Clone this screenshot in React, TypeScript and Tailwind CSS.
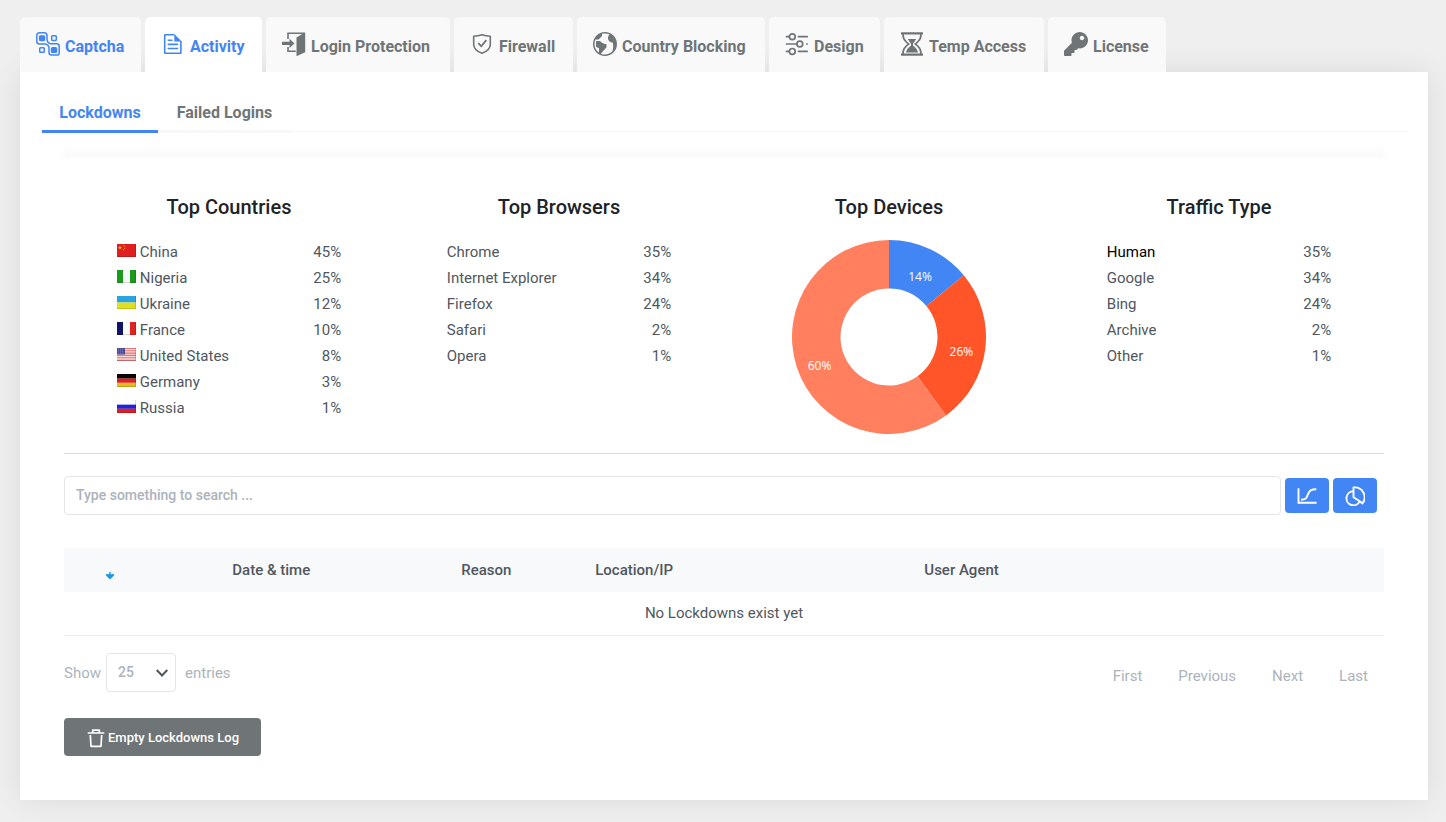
import React, { useState } from "react";
import { ImEarth } from "react-icons/im";
import { FaKey } from "react-icons/fa";

type Row = { name: string; value: string; strong?: boolean };

const CaptchaIcon = () => (
  <svg className="h-6 w-6 shrink-0" viewBox="0 0 24 24" fill="none" stroke="currentColor" strokeWidth="1.5">
    <path d="M3.500 .8h4.700q2.800 0 2.800 2.800v3.200q0 4 3.400 4.900h6.300q2.500 0 2.500 2.500v6.300q0 2.600-2.500 2.600h-5.200q-2.500 0-2.500-2.500v-3.800q0-4-3.400-4.700h-6.100q-2.700 0-2.700-2.500v-6.100q0-2.700 2.700-2.700z" />
    <rect x="3.600" y="3.900" width="4.900" height="4.500" rx=".8" fill="currentColor" />
    <rect x="15.600" y="15.700" width="4.900" height="4.500" rx=".8" fill="currentColor" />
    <rect x="15.700" y="3.800" width="4.600" height="4.600" rx=".8" />
    <rect x="3.700" y="15.700" width="4.600" height="4.600" rx=".8" />
  </svg>
);

const ActivityIcon = () => (
  <svg className="h-6 w-6 shrink-0" viewBox="0 0 24 24" fill="none" stroke="currentColor" strokeWidth="1.600">
    <path d="M13.500 2.700H4.300a.6.6 0 0 0-.6.6v17.400a.6.6 0 0 0 .6.600h15a.6.600 0 0 0 .6-.6V9" />
    <path d="M13.300 2l7.400 7.500h-7.400z" fill="currentColor" stroke="none" />
    <path d="M7.300 8.300h3.700M7.300 12.400h9.200M7.300 16.500h9.200" strokeLinecap="round" />
  </svg>
);

const DoorIcon = () => (
  <svg className="h-6 w-6 shrink-0" viewBox="0 0 24 24" fill="currentColor">
    <path d="M5.200 7V.400h18v19.800l-8.700 4V5.500L20.200 1.900H6.800V7z" />
    <path d="M5.200 15h1.600v3.500h7V20H5.200z" />
    <path d="M0 9.800h7.500V6.700l5 4.700-5 4.700v-3.200H0z" />
  </svg>
);

const ShieldIcon = () => (
  <svg className="h-6 w-6 shrink-0" viewBox="0 0 24 24" fill="none" stroke="currentColor" strokeWidth="1.600" strokeLinejoin="round">
    <path d="M12 2.800C9.200 3.700 6.500 4.100 3.700 4.200v8.300c0 4 3.500 7 8.300 8.800 4.800-1.800 8.300-4.800 8.300-8.800V4.200C17.500 4.100 14.800 3.700 12 2.800z" />
    <path d="M8.300 11l3 3.300 5-6.200" strokeWidth="1.800" />
  </svg>
);

const SlidersIcon = () => (
  <svg className="h-6 w-6 shrink-0" viewBox="0 0 24 24" fill="none" stroke="currentColor" strokeWidth="1.700" strokeLinecap="round">
    <circle cx="7.300" cy="4.700" r="2.900" />
    <circle cx="14.800" cy="12" r="2.900" />
    <circle cx="7.300" cy="19.400" r="2.900" />
    <path d="M1.500 4.700h2.300M13.500 4.700h8.700M1.500 12h10M21.800 12h.4M1.500 19.400h2.300M13.500 19.400h8.700" />
  </svg>
);

const HourglassIcon = () => (
  <svg className="h-6 w-6 shrink-0" viewBox="0 0 24 24" fill="currentColor">
    <path
      fillRule="evenodd"
      d="M1 .300h22v2.200h-1.200c0 4.300-1.500 6.500-5.300 9.500 3.800 3 5.300 5.200 5.300 9.500H23v2.200H1v-2.200h1.200c0-4.300 1.500-6.500 5.300-9.500-3.800-3-5.300-5.200-5.300-9.500H1zM4 2.500c0 4 1.700 6.200 6 9.500-4.300 3.300-6 5.500-6 9.500h16c0-4-1.700-6.200-6-9.500 4.300-3.300 6-5.500 6-9.500z"
    />
    <path d="M7.800 7h8.400L13 11.800v1.700c2.500 2 4.300 3.800 5 7H6c.7-3.200 2.500-5 5-7v-1.700z" />
  </svg>
);

const CurveIcon = () => (
  <svg className="h-5 w-5" viewBox="0 0 20 20" fill="none" stroke="currentColor" strokeWidth="1.900">
    <path d="M1.500 2.300V16.700H19.600" />
    <path d="M4 13.700c4.200 0 5.300-.8 6.700-4.800C12.300 4.500 14 3.200 19.300 3.200" />
  </svg>
);

const PieIcon = () => (
  <svg className="h-5 w-5" viewBox="0 0 20 20" fill="none" stroke="currentColor" strokeWidth="1.900" strokeLinejoin="round">
    <path d="M8.500 5.300a7 7 0 1 0 6.300 9.900" />
    <path d="M8.500 1.500a9.800 9.800 0 0 1 8.900 15.900l-2.600-2.200-6.300-4z" />
  </svg>
);

const TrashIcon = () => (
  <svg className="h-5 w-5 shrink-0" viewBox="0 0 20 20" fill="none" stroke="currentColor" strokeWidth="1.700" strokeLinejoin="round">
    <path d="M1.700 5h16.600M6.700 5V2.200h6.600V5M4.300 7l.7 11.300h10l.7-11.300" />
  </svg>
);

const tabs = [
  { label: "Captcha", icon: <CaptchaIcon />, width: "min-w-[121px]", tone: "bg-[#f9f9f9] text-[#4285f4]" },
  { label: "Activity", icon: <ActivityIcon />, width: "min-w-[117px]", tone: "relative bg-white text-[#4285f4]" },
  { label: "Login Protection", icon: <DoorIcon />, width: "min-w-[184px]", tone: "bg-[#f9f9f9] text-[#6f7577]" },
  { label: "Firewall", icon: <ShieldIcon />, width: "min-w-[119px]", tone: "bg-[#f9f9f9] text-[#6f7577]" },
  { label: "Country Blocking", icon: <ImEarth className="h-6 w-6 shrink-0" />, width: "min-w-[188px]", tone: "bg-[#f9f9f9] text-[#6f7577]" },
  { label: "Design", icon: <SlidersIcon />, width: "min-w-[111px]", tone: "bg-[#f9f9f9] text-[#6f7577]" },
  { label: "Temp Access", icon: <HourglassIcon />, width: "min-w-[160px]", tone: "bg-[#f9f9f9] text-[#6f7577]" },
  { label: "License", icon: <FaKey className="h-6 w-6 shrink-0" />, width: "min-w-[118px]", tone: "bg-[#f9f9f9] text-[#6f7577]" },
];

const flagArt: Record<string, React.ReactNode> = {
  China: (
    <>
      <rect width="19" height="14" fill="#de2020" />
      <path d="M3 2l.6 1.200 1.300.1-1 .9.300 1.300L3 4.800l-1.200.7.300-1.300-1-.9 1.300-.1z" fill="#ffd42a" />
      <path d="M6 1.500h1M7.300 3h1M7.300 5h1M6 6.300h1" stroke="#f0a020" />
    </>
  ),
  Nigeria: (
    <>
      <rect width="19" height="14" fill="#1c9a1c" />
      <rect x="6" width="7" height="14" fill="#f7f7f7" />
    </>
  ),
  Ukraine: (
    <>
      <rect width="19" height="7" fill="#2ba3df" />
      <rect y="7" width="19" height="7" fill="#dfe01f" />
    </>
  ),
  France: (
    <>
      <rect width="7" height="14" fill="#12126b" />
      <rect x="6" width="7" height="14" fill="#fafafa" />
      <rect x="13" width="6" height="14" fill="#e02424" />
    </>
  ),
  "United States": (
    <>
      <rect width="19" height="14" fill="#f6dada" />
      <path d="M0 .5h19M0 3h19M0 5.500h19M0 8h19M0 10.500h19M0 13.300h19" stroke="#e07878" strokeWidth="1.200" />
      <rect width="8" height="7" fill="#4c4c98" />
      <path d="M1 1.500h6M1 3.500h6M1 5.500h6" stroke="#8d8dc4" strokeWidth=".8" strokeDasharray="1 1" />
    </>
  ),
  Germany: (
    <>
      <rect width="19" height="5" fill="#050505" />
      <rect y="5" width="19" height="4.500" fill="#e01e1e" />
      <rect y="9.500" width="19" height="4.500" fill="#e3bd20" />
    </>
  ),
  Russia: (
    <>
      <rect width="19" height="5" fill="#fdfdfd" />
      <rect y="5" width="19" height="4.500" fill="#2222dd" />
      <rect y="9.500" width="19" height="4.500" fill="#e01e1e" />
    </>
  ),
};

const countries: Row[] = [
  { name: "China", value: "45%" },
  { name: "Nigeria", value: "25%" },
  { name: "Ukraine", value: "12%" },
  { name: "France", value: "10%" },
  { name: "United States", value: "8%" },
  { name: "Germany", value: "3%" },
  { name: "Russia", value: "1%" },
];

const browsers: Row[] = [
  { name: "Chrome", value: "35%" },
  { name: "Internet Explorer", value: "34%" },
  { name: "Firefox", value: "24%" },
  { name: "Safari", value: "2%" },
  { name: "Opera", value: "1%" },
];

const traffic: Row[] = [
  { name: "Human", value: "35%", strong: true },
  { name: "Google", value: "34%" },
  { name: "Bing", value: "24%" },
  { name: "Archive", value: "2%" },
  { name: "Other", value: "1%" },
];

function StatTable({ rows, flags = false }: { rows: Row[]; flags?: boolean }) {
  return (
    <table className="mx-auto w-[68%] text-[15px]">
      <tbody>
        {rows.map((row) => (
          <tr key={row.name} className="h-[26px]">
            <td className={row.strong ? "p-0 text-black" : "p-0"}>
              <span className="flex items-center gap-1">
                {flags && (
                  <svg className="mb-1 h-[13px] w-[19px]" viewBox="0 0 19 14" preserveAspectRatio="none" aria-hidden="true">
                    {flagArt[row.name]}
                    <path d="M0 13.500h18.500V0" fill="none" stroke="#000" strokeOpacity=".15" />
                  </svg>
                )}
                {row.name}
              </span>
            </td>
            <td className="p-0 text-right">{row.value}</td>
          </tr>
        ))}
      </tbody>
    </table>
  );
}

const slices = [
  { share: 14, color: "#4285f4" },
  { share: 26, color: "#ff5529" },
  { share: 60, color: "#ff7f5e" },
];

function Donut() {
  const point = (share: number, radius: number) => {
    const angle = (share / 100) * 2 * Math.PI;
    return [97 + radius * Math.sin(angle), 98 - radius * Math.cos(angle)];
  };
  let start = 0;
  return (
    <svg className="mx-auto h-[195px] w-[194px]" viewBox="0 0 194 195" role="img" aria-label="Top Devices">
      {slices.map(({ share, color }) => {
        const end = start + share;
        const middle = start + share / 2;
        const large = share > 50 ? 1 : 0;
        const [ax, ay] = point(start, 97);
        const [bx, by] = point(end, 97);
        const [cx, cy] = point(end, 48.5);
        const [dx, dy] = point(start, 48.5);
        const [tx, ty] = point(middle, 73);
        start = end;
        return (
          <g key={share}>
            <path d={`M${ax} ${ay}A97 97 0 ${large} 1 ${bx} ${by}L${cx} ${cy}A48.5 48.5 0 ${large} 0 ${dx} ${dy}z`} fill={color} />
            <text x={tx} y={ty + 10} textAnchor="middle" className="fill-white font-['Open_Sans',sans-serif] text-xs font-medium">
              {share}%
            </text>
          </g>
        );
      })}
    </svg>
  );
}

function Stat({ title, children }: { title: string; children: React.ReactNode }) {
  return (
    <section>
      <h3 className="mb-5 text-center text-xl leading-6 font-medium text-[#1d2327]">{title}</h3>
      {children}
    </section>
  );
}

export default function App() {
  const [query, setQuery] = useState("");
  return (
    <div className="min-h-screen bg-[#efefef] pt-[17px] pr-[18px] pb-[22px] pl-5 font-[Roboto,sans-serif] text-[#50575e]">
      <nav className="flex gap-1" aria-label="Sections">
        {tabs.map((tab) => (
          <a
            key={tab.label}
            href="#"
            className={`flex h-[55px] items-center gap-[5px] rounded-t-[5px] pb-px pl-4 text-base font-bold whitespace-nowrap ${tab.width} ${tab.tone}`}
          >
            {tab.icon}
            <span className="pt-[5px]">{tab.label}</span>
          </a>
        ))}
      </nav>

      <main className="bg-white px-[22px] pt-[22px] pb-11 shadow-[0_0_30px_rgba(0,0,0,0.09)]">
        <nav className="mr-[-2px] flex border-b border-[#f7f7f7] text-base font-bold" aria-label="Activity logs">
          <a href="#" className="-mb-0.5 min-w-[116px] border-b-[3px] border-[#4285f4] px-4 pt-[9px] pb-[7px] text-center leading-5 text-[#4285f4]">
            Lockdowns
          </a>
          <a href="#" className="-mb-0.5 min-w-[133px] border-b-[3px] border-[#f7f7f7] px-4 pt-[9px] pb-[7px] text-center leading-5 text-[#6f7577]">
            Failed Logins
          </a>
        </nav>

        <div className="px-[22px] pt-[18px]">
          <div className="h-2 bg-[#fafafa] blur-[2px]" />

          <div className="mt-[37px] grid grid-cols-4 border-b border-[#d9dadc] pb-[19px]">
            <Stat title="Top Countries">
              <StatTable rows={countries} flags />
            </Stat>
            <Stat title="Top Browsers">
              <StatTable rows={browsers} />
            </Stat>
            <Stat title="Top Devices">
              <Donut />
            </Stat>
            <Stat title="Traffic Type">
              <StatTable rows={traffic} />
            </Stat>
          </div>

          <form className="mt-[22px] flex items-center gap-1 pr-[7px]" onSubmit={(event) => event.preventDefault()}>
            <input
              type="text"
              aria-label="Search lockdowns"
              placeholder="Type something to search ..."
              value={query}
              onChange={(event) => setQuery(event.target.value)}
              className="h-[39px] min-w-0 flex-1 rounded border border-[#e4e6ea] px-[11px] pb-0.5 text-sm font-medium placeholder:text-[#acb3bb]"
            />
            <button type="button" aria-label="Show chart" className="flex h-[35px] w-11 items-center justify-center rounded bg-[#4285f4] text-white">
              <CurveIcon />
            </button>
            <button type="button" aria-label="Show statistics" className="flex h-[35px] w-11 items-center justify-center rounded bg-[#4285f4] text-white">
              <PieIcon />
            </button>
          </form>

          <table className="mt-[33px] w-full table-fixed text-center text-[15px]">
            <colgroup>
              <col className="w-[7%]" />
              <col className="w-[17.4%]" />
              <col className="w-[15.2%]" />
              <col className="w-[7.2%]" />
              <col className="w-[42.4%]" />
              <col />
            </colgroup>
            <thead className="bg-[#f8f9fb]">
              <tr className="h-11">
                <th aria-label="Sort">
                  <svg className="mx-auto mt-3 h-2 w-2 text-[#1e96e6]" viewBox="0 0 8 8" fill="currentColor">
                    <path d="M3.300 0h1.400v2.200L7.900 2 8 3.500 4 7.500 0 3.500.1 2l3.200.2z" />
                  </svg>
                </th>
                <th className="font-medium">Date &amp; time</th>
                <th className="font-medium">Reason</th>
                <th className="font-medium">Location/IP</th>
                <th className="font-medium">User Agent</th>
                <th />
              </tr>
            </thead>
            <tbody>
              <tr className="h-[43px] border-b border-[#ececee]">
                <td colSpan={6}>No Lockdowns exist yet</td>
              </tr>
            </tbody>
          </table>

          <div className="mt-[17px] flex items-center justify-between text-[15px] text-[#acb3bb]">
            <label className="flex items-center">
              <span className="pt-[3px]">Show</span>
              <span className="relative mr-[9px] ml-[5px]">
                <select
                  defaultValue="25"
                  className="h-[39px] w-[70px] appearance-none rounded border border-[#e4e6ea] bg-white px-[11px] text-sm font-medium"
                >
                  <option>10</option>
                  <option>25</option>
                  <option>50</option>
                  <option>100</option>
                </select>
                <svg className="pointer-events-none absolute top-3.5 right-2 h-3 w-3" viewBox="0 0 12 12" fill="none" stroke="#50575e" strokeWidth="2">
                  <path d="M.7 3l5.300 5.500L11.300 3" />
                </svg>
              </span>
              <span className="pt-[3px]">entries</span>
            </label>
            <nav className="flex gap-9 pt-2 pr-4" aria-label="Pages">
              <a href="#">First</a>
              <a href="#">Previous</a>
              <a href="#">Next</a>
              <a href="#">Last</a>
            </nav>
          </div>

          <button type="button" className="mt-[26px] flex h-[38px] items-center gap-0.5 rounded bg-[#6f7577] px-[22px] pt-0.5 text-[13px] font-medium text-white">
            <TrashIcon />
            Empty Lockdowns Log
          </button>
        </div>
      </main>
    </div>
  );
}
